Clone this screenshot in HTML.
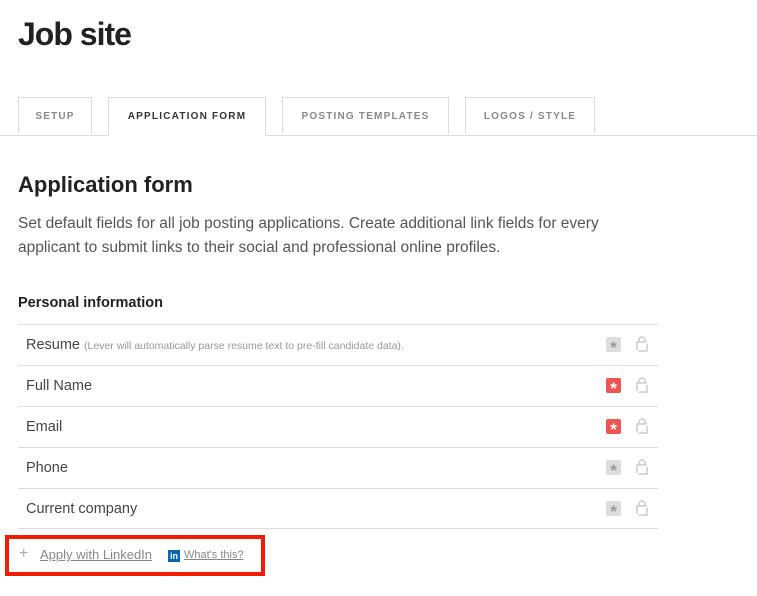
<html><head><style>
body{margin:0;background:#fff;font-family:"Liberation Sans",sans-serif;color:#333;width:757px;height:596px;overflow:hidden;position:relative}
.a{position:absolute}
h1{position:absolute;left:18px;top:16px;margin:0;font-size:32px;font-weight:bold;color:#222;letter-spacing:-1px}
.tab{position:absolute;top:97px;height:37px;border:1px solid #ddd;border-bottom:none;background:#fff;font-size:10px;letter-spacing:1.2px;color:#888;text-align:center;line-height:38px;box-sizing:border-box;font-weight:bold}
.line{position:absolute;left:0;top:135px;width:757px;height:1px;background:#ddd}
.row{position:absolute;left:18px;width:640px;height:41px;border-top:1px solid #ddd;box-sizing:border-box;font-size:14.5px;line-height:40px;padding-left:8px;color:#444}
.st{position:absolute;left:588px;top:12px;width:15px;height:15px;border-radius:2px;background:#ddd;color:#999;font-size:17px;line-height:22px;text-align:center;font-weight:bold}
.st.r{background:#e55;color:#fff}
.lk{position:absolute;left:617px;top:11px;width:14px;height:16px}
</style></head><body>
<h1>Job site</h1>
<div class="line"></div>
<div class="tab" style="left:18px;width:74px">SETUP</div>
<div class="tab" style="left:108px;width:158px;height:39px;color:#333">APPLICATION FORM</div>
<div class="tab" style="left:282px;width:167px">POSTING TEMPLATES</div>
<div class="tab" style="left:465px;width:130px">LOGOS / STYLE</div>
<div class="a" style="left:18px;top:172px;font-size:22px;font-weight:bold;color:#222">Application form</div>
<div class="a" style="left:18px;top:212px;font-size:15.5px;line-height:24px;color:#555;width:610px">Set default fields for all job posting applications. Create additional link fields for every applicant to submit links to their social and professional online profiles.</div>
<div class="a" style="left:18px;top:295px;font-size:14.5px;font-weight:bold;color:#222">Personal information</div>
<div class="row" style="top:324px">Resume <span style="font-size:10.5px;color:#999">(Lever will automatically parse resume text to pre-fill candidate data).</span><div class="st">*</div><svg class="lk" viewBox="0 0 14 16"><path d="M4 6V4a3 3 0 0 1 6 0v2M2 6h10v9H2z" fill="none" stroke="#ccc" stroke-width="1.5"/><path d="M1 16L14 5" stroke="#fff" stroke-width="1.5"/></svg></div>
<div class="row" style="top:365px">Full Name<div class="st r">*</div><svg class="lk" viewBox="0 0 14 16"><path d="M4 6V4a3 3 0 0 1 6 0v2M2 6h10v9H2z" fill="none" stroke="#ccc" stroke-width="1.5"/><path d="M1 16L14 5" stroke="#fff" stroke-width="1.5"/></svg></div>
<div class="row" style="top:406px">Email<div class="st r">*</div><svg class="lk" viewBox="0 0 14 16"><path d="M4 6V4a3 3 0 0 1 6 0v2M2 6h10v9H2z" fill="none" stroke="#ccc" stroke-width="1.5"/><path d="M1 16L14 5" stroke="#fff" stroke-width="1.5"/></svg></div>
<div class="row" style="top:447px">Phone<div class="st">*</div><svg class="lk" viewBox="0 0 14 16"><path d="M4 6V4a3 3 0 0 1 6 0v2M2 6h10v9H2z" fill="none" stroke="#ccc" stroke-width="1.5"/><path d="M1 16L14 5" stroke="#fff" stroke-width="1.5"/></svg></div>
<div class="row" style="top:488px;border-bottom:1px solid #ddd">Current company<div class="st">*</div><svg class="lk" viewBox="0 0 14 16"><path d="M4 6V4a3 3 0 0 1 6 0v2M2 6h10v9H2z" fill="none" stroke="#ccc" stroke-width="1.5"/><path d="M1 16L14 5" stroke="#fff" stroke-width="1.5"/></svg></div>
<div class="a" style="left:5px;top:535px;width:252px;height:33px;border:4px solid #f21d00"></div>
<div class="a" style="left:19px;top:545px;font-size:16px;color:#aaa">+</div>
<div class="a" style="left:40px;top:547px;font-size:13px;color:#888;text-decoration:underline">Apply with LinkedIn</div>
<div class="a" style="left:168px;top:550px;width:12px;height:12px;background:#0a66a8;color:#fff;font-size:9px;font-weight:bold;line-height:13px;text-align:center">in</div>
<div class="a" style="left:184px;top:549px;font-size:11px;color:#888;text-decoration:underline">What's this?</div>
</body></html>
